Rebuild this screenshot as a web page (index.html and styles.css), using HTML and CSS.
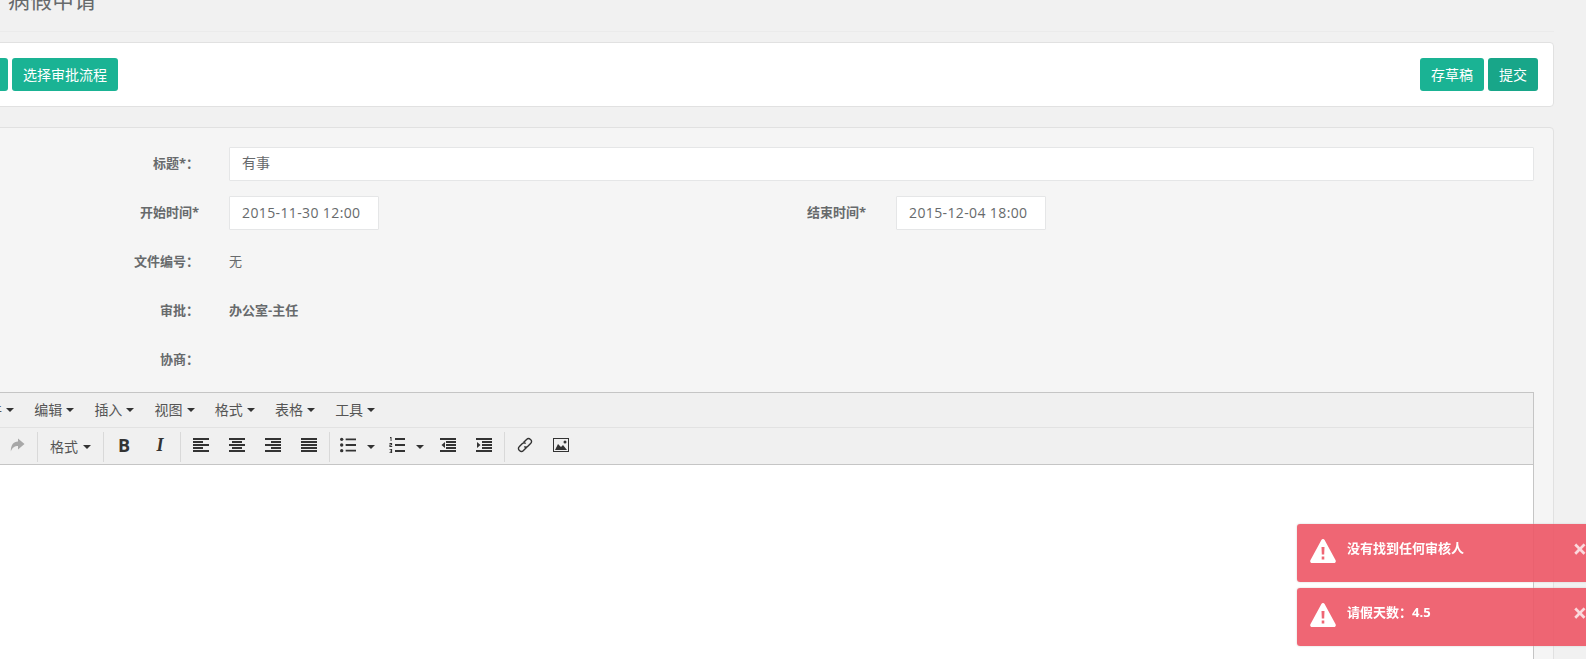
FILE: index.html
```html
<!DOCTYPE html>
<html lang="zh">
<head>
<meta charset="utf-8">
<title>病假申请</title>
<link rel="stylesheet" href="styles.css">
</head>
<body>
<svg class="defs" width="0" height="0" aria-hidden="true">
  <symbol id="i-undo" viewBox="0 0 16 16"><path d="M7 2 1 7.5 7 13V9.5c3 0 5.500.8 7 4 0-5-2.500-8.500-7-8.500z"/></symbol>
  <symbol id="i-redo" viewBox="0 0 16 16"><path d="M9 1.500 15.500 7 9 12.500V9C6 9 3.500 10.200 1.800 14.500 1.800 8 4.500 4.500 9 4.500z"/></symbol>
  <symbol id="i-left" viewBox="0 0 16 16"><path d="M0 1h16v2H0zM0 4h10v2H0zM0 7h16v2H0zM0 10h10v2H0zM0 13h16v2H0z"/></symbol>
  <symbol id="i-center" viewBox="0 0 16 16"><path d="M0 1h16v2H0zM3 4h10v2H3zM0 7h16v2H0zM3 10h10v2H3zM0 13h16v2H0z"/></symbol>
  <symbol id="i-right" viewBox="0 0 16 16"><path d="M0 1h16v2H0zM6 4h10v2H6zM0 7h16v2H0zM6 10h10v2H6zM0 13h16v2H0z"/></symbol>
  <symbol id="i-justify" viewBox="0 0 16 16"><path d="M0 1h16v2H0zM0 4h16v2H0zM0 7h16v2H0zM0 10h16v2H0zM0 13h16v2H0z"/></symbol>
  <symbol id="i-bullet" viewBox="0 0 17 16"><circle cx="1.800" cy="2" r="1.800"/><circle cx="1.800" cy="8" r="1.800"/><circle cx="1.800" cy="14" r="1.800"/><path d="M6 1h11v2H6zM6 7h11v2H6zM6 13h11v2H6z"/></symbol>
  <symbol id="i-num" viewBox="0 0 16 16"><path d="M1 0h1.500v4H1.600V1.200H1zM.5 6h2.600v2.200H1.500v.8h1.700v1H.4V7.600H2V7H.5zM.5 12h2.600v4H.5v-.8H2v-.8H1v-.7h1v-.9H.5zM6 1h10v2H6zM6 7h10v2H6zM6 13h10v2H6z"/></symbol>
  <symbol id="i-outdent" viewBox="0 0 16 16"><path d="M0 1h16v2H0zM6 4h10v2H6zM6 7h10v2H6zM6 10h10v2H6zM0 13h16v2H0zM5 5v6L1.500 8z"/></symbol>
  <symbol id="i-indent" viewBox="0 0 16 16"><path d="M0 1h16v2H0zM6 4h10v2H6zM6 7h10v2H6zM6 10h10v2H6zM0 13h16v2H0zM1 5v6l3.500-3z"/></symbol>
  <symbol id="i-link" viewBox="0 0 16 16"><path fill="none" stroke="currentColor" stroke-width="1.400" d="M6.500 5.500 9.800 2.200a2.300 2.300 0 0 1 3.400 0l.6.6a2.300 2.300 0 0 1 0 3.400L10.600 9.400a2.300 2.300 0 0 1-3.300 0M9.500 10.500l-3.300 3.300a2.300 2.300 0 0 1-3.400 0l-.6-.6a2.300 2.300 0 0 1 0-3.400l3.200-3.200a2.300 2.300 0 0 1 3.300 0"/></symbol>
  <symbol id="i-image" viewBox="0 0 16 16"><path fill-rule="evenodd" d="M0 1h16v14H0zM1 2v12h14V2z"/><circle cx="12" cy="5" r="1.500"/><path d="M2 13l3-6 3 3 2-2 4 5z"/></symbol>
</svg>

<div class="page">
  <header class="page-head"><h2 class="page-title">病假申请</h2></header>

  <section class="card action-bar">
    <div class="btn-group">
      <button class="btn">选择</button>
      <button class="btn">选择审批流程</button>
    </div>
    <div class="btn-group">
      <button class="btn">存草稿</button>
      <button class="btn btn-dark">提交</button>
    </div>
  </section>

  <section class="card form-card">
    <div class="row">
      <label class="label">标题*<span class="colon">：</span></label>
      <div class="input input-wide">有事</div>
    </div>
    <div class="row">
      <label class="label">开始时间*</label>
      <div class="input input-date">2015-11-30 12:00</div>
      <label class="label label-second">结束时间*</label>
      <div class="input input-date">2015-12-04 18:00</div>
    </div>
    <div class="row">
      <label class="label">文件编号<span class="colon">：</span></label>
      <div class="value">无</div>
    </div>
    <div class="row">
      <label class="label">审批<span class="colon">：</span></label>
      <div class="value value-bold">办公室-主任</div>
    </div>
    <div class="row">
      <label class="label">协商<span class="colon">：</span></label>
    </div>

    <div class="editor">
      <div class="menubar">
        <span class="menu-item">文件<i class="caret"></i></span>
        <span class="menu-item">编辑<i class="caret"></i></span>
        <span class="menu-item">插入<i class="caret"></i></span>
        <span class="menu-item">视图<i class="caret"></i></span>
        <span class="menu-item">格式<i class="caret"></i></span>
        <span class="menu-item">表格<i class="caret"></i></span>
        <span class="menu-item">工具<i class="caret"></i></span>
      </div>
      <div class="toolbar">
        <div class="tool-group tool-group-first">
          <span class="tool muted"><svg class="icon"><use href="#i-undo"/></svg></span>
          <span class="tool muted"><svg class="icon"><use href="#i-redo"/></svg></span>
        </div>
        <div class="tool-group">
          <span class="tool tool-text">格式<i class="caret"></i></span>
        </div>
        <div class="tool-group">
          <span class="tool tool-glyph tool-bold">B</span>
          <span class="tool tool-glyph tool-italic">I</span>
        </div>
        <div class="tool-group">
          <span class="tool"><svg class="icon"><use href="#i-left"/></svg></span>
          <span class="tool"><svg class="icon"><use href="#i-center"/></svg></span>
          <span class="tool"><svg class="icon"><use href="#i-right"/></svg></span>
          <span class="tool"><svg class="icon"><use href="#i-justify"/></svg></span>
        </div>
        <div class="tool-group">
          <span class="tool tool-split"><svg class="icon"><use href="#i-bullet"/></svg><i class="caret"></i></span>
          <span class="tool tool-split"><svg class="icon"><use href="#i-num"/></svg><i class="caret"></i></span>
          <span class="tool"><svg class="icon"><use href="#i-outdent"/></svg></span>
          <span class="tool"><svg class="icon"><use href="#i-indent"/></svg></span>
        </div>
        <div class="tool-group tool-group-last">
          <span class="tool"><svg class="icon"><use href="#i-link"/></svg></span>
          <span class="tool"><svg class="icon"><use href="#i-image"/></svg></span>
        </div>
      </div>
      <div class="editor-body"></div>
    </div>
  </section>
</div>

<aside class="toasts">
  <div class="toast">
    <svg class="toast-icon" viewBox="0 0 26 24"><path fill-rule="evenodd" fill="#fff" d="M13 0c.7 0 1.300.4 1.600 1l11 20.300c.6 1.200-.2 2.700-1.600 2.700H2c-1.400 0-2.200-1.500-1.600-2.700L11.400 1c.3-.6.9-1 1.600-1zM11.500 8l.3 7.500h2.400l.3-7.500zM11.700 17.500v3h2.600v-3z"/></svg>
    <span class="toast-text">没有找到任何审核人</span>
    <span class="toast-close">×</span>
  </div>
  <div class="toast">
    <svg class="toast-icon" viewBox="0 0 26 24"><path fill-rule="evenodd" fill="#fff" d="M13 0c.7 0 1.300.4 1.600 1l11 20.300c.6 1.200-.2 2.700-1.600 2.700H2c-1.400 0-2.200-1.500-1.600-2.700L11.400 1c.3-.6.9-1 1.600-1zM11.500 8l.3 7.500h2.400l.3-7.500zM11.700 17.500v3h2.600v-3z"/></svg>
    <span class="toast-text">请假天数<span class="colon">：</span>4.5</span>
    <span class="toast-close">×</span>
  </div>
</aside>
</body>
</html>
```
FILE: styles.css
```css
* { box-sizing: border-box; }
html, body { height: 100%; }
body {
  margin: 0;
  overflow: hidden;
  background: #f1f1f1;
  color: #676a6c;
  font: 14px/20px "Open Sans", "Noto Sans CJK SC", sans-serif;
}
.defs { position: absolute; }
.page { margin: -20px 32px 0 -60px; }
.page-head { height: 52px; margin-left: 60px; padding: 4px 0 0 8px; border-bottom: 1px solid #ebebeb; }
.page-title { margin: 0; font-size: 22px; font-weight: 400; line-height: 30px; color: #676a6c; }
.card { border: 1px solid #e1e1e1; border-radius: 4px; }
.action-bar {
  display: flex;
  justify-content: space-between;
  margin-top: 10px;
  padding: 15px 15px 15px 17px;
  background: #fff;
}
.btn-group { display: flex; gap: 4px; }
.btn {
  height: 33px;
  padding: 0 11px;
  border: 0;
  border-radius: 3px;
  background: #1ab394;
  color: #fff;
  font: inherit;
  line-height: 33px;
}
.btn-dark { background: #18a689; }
.form-card {
  margin-top: 20px;
  padding: 19px 19px 0;
  background: #f5f5f5;
  height: 700px;
}
.row { display: flex; align-items: center; gap: 30px; height: 34px; margin-bottom: 15px; }
.label { width: 239px; flex: none; padding-bottom: 2px; text-align: right; font-size: 13px; font-weight: 700; }
.label-second { width: 457px; }
.colon { font-family: "Noto Sans CJK TC", sans-serif; }
.input {
  height: 34px;
  padding: 0 12px;
  border: 1px solid #e5e6e7;
  border-radius: 1px;
  background: #fff;
  line-height: 32px;
}
.input-wide { flex: 1; line-height: 30px; }
.input-date { flex: none; width: 150px; letter-spacing: .38px; }
.value { padding-bottom: 2px; font-size: 13px; }
.value-bold { font-weight: 700; }
.editor { border: 1px solid #c5c5c5; border-bottom: 0; background: #f0f0f0; color: #333; }
.menubar { display: flex; height: 35px; padding-left: 3px; border-bottom: 1px solid #e2e2e2; align-items: center; }
.menu-item { display: flex; align-items: center; width: 60.2px; padding-left: 10px; color: #555; }
.caret { display: inline-block; width: 0; height: 0; margin-left: 4px; border: 4px solid transparent; border-top-color: #333; border-bottom: 0; }
.toolbar { display: flex; height: 37px; padding-top: 4px; border-bottom: 1px solid #c5c5c5; }
.tool-group { display: flex; height: 30px; padding: 0 2px; border-right: 1px solid #d9d9d9; }
.tool-group-first { padding-left: 2px; }
.tool-group-last { border-right: 0; }
.tool { display: flex; align-items: center; width: 36px; height: 30px; padding: 0 10px; }
.icon { width: 16px; height: 16px; margin-top: -4px; fill: currentColor; color: #333; flex: none; overflow: visible; }
.muted .icon { color: #a8a8a8; }
.tool-text { width: auto; color: #555; }
.tool-text .caret { margin-left: 5px; }
.tool-glyph { justify-content: center; padding: 0 0 4px; color: #333; }
.tool-bold { font: 700 18px/30px "Open Sans", sans-serif; }
.tool-italic { font: italic 700 18px/30px "Liberation Serif", serif; }
.tool-split { width: 49px; padding: 0 0 0 8px; }
.tool-split .caret { margin-left: 11px; margin-top: 0; }
.editor-body { height: 400px; background: #fff; }
.toasts { position: fixed; left: 1297px; top: 524px; width: 300px; display: flex; flex-direction: column; gap: 6px; }
.toast {
  display: flex;
  align-items: flex-start;
  height: 58px;
  padding: 15px 0 0 13px;
  border-radius: 3px;
  background: rgba(237, 85, 101, .9);
  box-shadow: 0 0 2px #ccc;
  color: #fff;
  font-weight: 700;
}
.toast-icon { width: 26px; height: 24px; flex: none; }
.toast-text { margin: -1px 0 0 11px; font-size: 13px; }
.toast-close { margin: -1px 10px 0 auto; font-size: 25px; line-height: 20px; opacity: .75; }
```
